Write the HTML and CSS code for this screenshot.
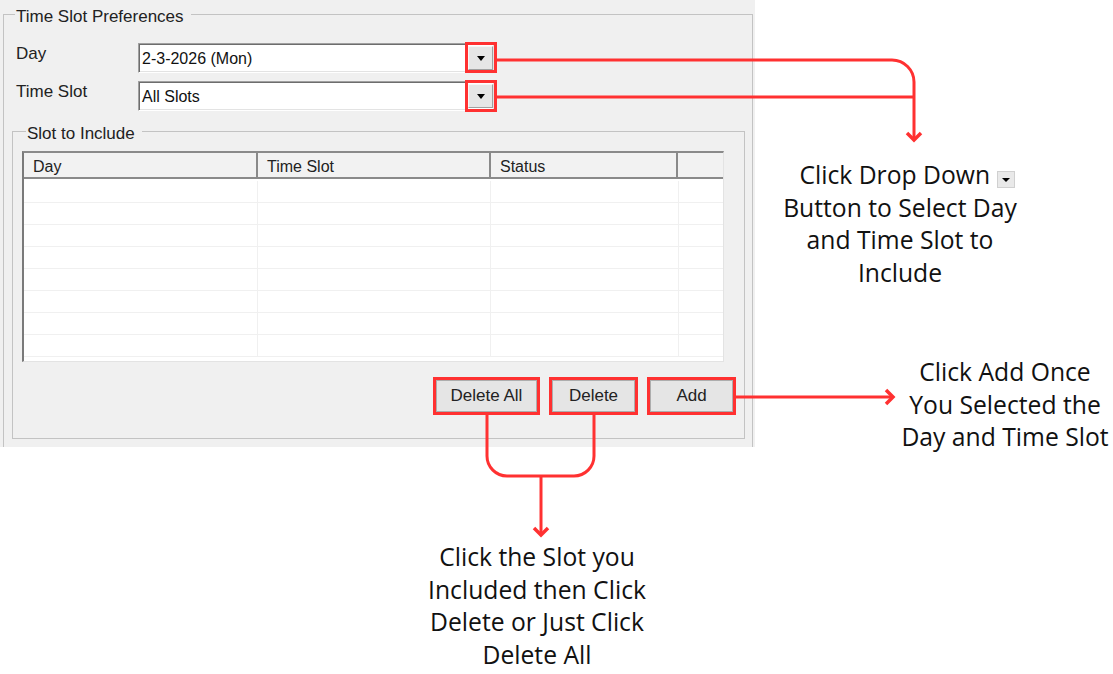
FILE: index.html
```html
<!DOCTYPE html>
<html lang="en">
<head>
  <meta charset="UTF-8" />
  <meta name="viewport" content="width=device-width, initial-scale=1.0"/>
  <title>Time Slot Preferences</title>

  <link rel="stylesheet" href="styles.css">
</head>
<body>
  <div class="page">

    <!-- the dialog part -->
    <div class="window">
      <fieldset class="group outer">
        <legend>Time Slot Preferences</legend>

        <div class="field">
          <span class="field-label">Day</span>
          <div class="combo">
            <span class="combo-text">2-3-2026 (Mon)</span>
            <span class="combo-btn"><i class="caret"></i></span>
          </div>
        </div>

        <div class="field">
          <span class="field-label">Time Slot</span>
          <div class="combo">
            <span class="combo-text">All Slots</span>
            <span class="combo-btn"><i class="caret"></i></span>
          </div>
        </div>

        <fieldset class="group inner">
          <legend>Slot to Include</legend>

          <div class="list">
            <div class="list-head">
              <div class="head-cell col-day">Day</div>
              <div class="head-cell col-slot">Time Slot</div>
              <div class="head-cell col-status">Status</div>
              <div class="head-cell col-rest"></div>
            </div>
            <div class="list-body">
              <div class="row"><span class="col-day"></span><span class="col-slot"></span><span class="col-status"></span><span class="col-rest"></span></div>
              <div class="row"><span class="col-day"></span><span class="col-slot"></span><span class="col-status"></span><span class="col-rest"></span></div>
              <div class="row"><span class="col-day"></span><span class="col-slot"></span><span class="col-status"></span><span class="col-rest"></span></div>
              <div class="row"><span class="col-day"></span><span class="col-slot"></span><span class="col-status"></span><span class="col-rest"></span></div>
              <div class="row"><span class="col-day"></span><span class="col-slot"></span><span class="col-status"></span><span class="col-rest"></span></div>
              <div class="row"><span class="col-day"></span><span class="col-slot"></span><span class="col-status"></span><span class="col-rest"></span></div>
              <div class="row"><span class="col-day"></span><span class="col-slot"></span><span class="col-status"></span><span class="col-rest"></span></div>
              <div class="row"><span class="col-day"></span><span class="col-slot"></span><span class="col-status"></span><span class="col-rest"></span></div>
            </div>
          </div>

          <div class="actions">
            <button class="win-btn btn-wide">Delete All</button>
            <button class="win-btn">Delete</button>
            <button class="win-btn">Add</button>
          </div>
        </fieldset>
      </fieldset>
    </div>

    <!-- red callouts drawn over the dialog -->
    <svg class="marks" width="1113" height="674" viewBox="0 0 1113 674">
      <g fill="none" stroke="#ff3131" stroke-width="3">
        <rect x="466.5" y="43.5" width="29" height="28" />
        <rect x="466.5" y="81.5" width="29" height="29" />
        <path d="M497 60 H892 A22 22 0 0 1 914 82 V140" />
        <path d="M497 97 H914" />
        <path d="M907 133 L914 140 L921 133" stroke-width="3.5" />

        <rect x="434.5" y="378.5" width="104" height="35" />
        <rect x="550.5" y="378.5" width="86" height="35" />
        <rect x="648.5" y="378.5" width="86" height="35" />

        <path d="M736 397 H893" />
        <path d="M886 390 L893 397 L886 404" stroke-width="3.5" />

        <path d="M487 415 V456 A20 20 0 0 0 507 476 H574 A20 20 0 0 0 594 456 V415" />
        <path d="M541 476 V535" />
        <path d="M534 528 L541 535 L548 528" stroke-width="3.5" />
      </g>
    </svg>

    <p class="note note-drop">Click Drop Down <span class="mini-drop"><i class="caret"></i></span><br>Button to Select Day<br>and Time Slot to<br>Include</p>
    <p class="note note-add">Click Add Once<br>You Selected the<br>Day and Time Slot</p>
    <p class="note note-delete">Click the Slot you<br>Included then Click<br>Delete or Just Click<br>Delete All</p>
  </div>
</body>
</html>
```

FILE: styles.css
```css
* {
  box-sizing: border-box;
}

body {
  margin: 0;
  background: #fff;
  font-family: 'Liberation Sans', Arial, sans-serif;
  color: #111;
}

.page {
  position: relative;
  width: 1113px;
  height: 674px;
  overflow: hidden;
}

/* ---------- dialog ---------- */

.window {
  width: 755px;
  height: 447px;
  background: #f0f0f0;
  overflow: hidden;
  font-size: 16px;
}

.group {
  margin: 0;
  border: 1px solid #c3c3c3;
  min-inline-size: 0;
}

.group legend {
  padding: 5px 7px 0 1px;
  font-size: 17px;
  line-height: 20px;
  color: #222;
}

.outer {
  width: 750px;
  margin: 2px 0 0 3px;
  padding: 16px 0 20px 12px;
}

.outer > legend {
  margin-left: -1px;
}

.field {
  display: flex;
  height: 30px;
  margin-bottom: 8px;
}

.field-label {
  width: 122px;
  padding-top: 1px;
  font-size: 17px;
  line-height: 20px;
  color: #222;
}

.combo {
  display: flex;
  width: 357px;
  height: 30px;
  background: #fff;
  border: 1px solid;
  border-color: #a0a0a0 #fff #fff #a0a0a0;
  box-shadow: inset 1px 1px 0 #6d6d6d, inset -1px -1px 0 #e3e3e3;
}

.combo-text {
  flex: 1;
  padding: 2px 0 0 3px;
  line-height: 26px;
  color: #111;
}

.combo-btn {
  display: flex;
  align-items: center;
  justify-content: center;
  width: 25px;
  height: 24px;
  margin: 2px 1px 0 0;
  background: #e6e6e6;
  border: 1px solid;
  border-color: #f7f7f7 #a0a0a0 #a0a0a0 #f7f7f7;
}

.caret {
  display: block;
  width: 0;
  height: 0;
  border-left: 4.5px solid transparent;
  border-right: 4.5px solid transparent;
  border-top: 5px solid #000;
}

.inner {
  width: 733px;
  margin: 4px 0 0 -4px;
  padding: 7px 11px 26px 9px;
}

.inner > legend {
  margin-left: 4px;
}

/* list view */

.list {
  width: 702px;
  height: 211px;
  background: #fff;
  border-style: solid;
  border-width: 2px 1px 1px 2px;
  border-color: #8a8a8a #e3e3e3 #e3e3e3 #7a7a7a;
  overflow: hidden;
}

.list-head {
  display: flex;
  height: 26px;
  background: #f2f2f2;
  border-bottom: 2px solid #8a8a8a;
}

.head-cell {
  padding: 3px 0 0 9px;
  line-height: 21px;
  color: #222;
  border-right: 2px solid #8a8a8a;
}

.head-cell.col-rest {
  border-right: none;
}

.col-day { width: 234px; }
.col-slot { width: 233px; }
.col-status { width: 187px; }
.col-rest { flex: 1; }

.list-body {
  padding-top: 2px;
}

.row {
  display: flex;
  height: 22px;
  border-bottom: 1px solid #f0f0f0;
}

.row span {
  border-right: 1px solid #f0f0f0;
}

.row .col-status {
  width: 188px;
}

.row .col-rest {
  border-right: none;
}

.actions {
  display: flex;
  justify-content: flex-end;
  gap: 15px;
  margin-top: 18px;
}

.win-btn {
  width: 83px;
  height: 32px;
  padding: 0;
  font-family: inherit;
  font-size: 17px;
  color: #222;
  background: #e5e5e5;
  border: 1px solid #adadad;
}

.btn-wide {
  width: 101px;
}

/* ---------- callouts ---------- */

.marks {
  position: absolute;
  top: 0;
  left: 0;
  pointer-events: none;
}

.note {
  position: absolute;
  margin: 0;
  font-family: 'Open Sans', sans-serif;
  font-size: 24.7px;
  line-height: 32.5px;
  color: #111;
  text-align: center;
  white-space: nowrap;
}

.note-drop {
  top: 159px;
  left: 750px;
  width: 300px;
}

.note-add {
  top: 356px;
  left: 900px;
  width: 210px;
}

.note-delete {
  top: 541px;
  left: 407px;
  width: 260px;
}

.mini-drop {
  display: inline-block;
  width: 18px;
  height: 17px;
  margin-right: -14px;
  vertical-align: -4px;
  background: #e9e9e9;
  border: 1px solid #d0d0d0;
}

.mini-drop .caret {
  margin: 6px auto 0;
  border-left-width: 4px;
  border-right-width: 4px;
  border-top-width: 4px;
}
```
